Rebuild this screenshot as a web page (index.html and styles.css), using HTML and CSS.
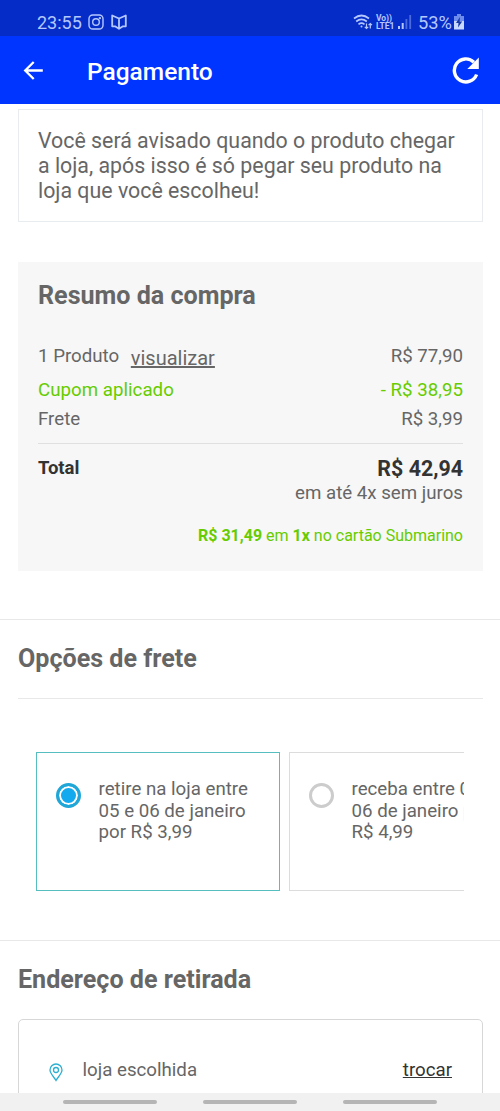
FILE: index.html
```html
<!DOCTYPE html>
<html lang="pt-BR">
<head>
<meta charset="utf-8">
<title>Pagamento</title>
<link rel="stylesheet" href="styles.css">
</head>
<body>
<div class="screen">
  <div class="status">
    <span class="clock">23:55</span>
    <svg class="insta" width="16" height="16" viewBox="0 0 16 16" fill="none" stroke="#b4c8ff" stroke-width="1.4"><rect x="1" y="1" width="14" height="14" rx="3.8"/><circle cx="8" cy="8" r="3.3"/><circle cx="11.9" cy="4.1" r=".5"/></svg>
    <svg class="book" width="16" height="16" viewBox="0 0 16 16" fill="none" stroke="#b4c8ff" stroke-width="1.8" stroke-linejoin="round"><path d="M1.200 1.500 8 4.500l6.800-3v10.800H12L8 14.800 4 12.300H1.200zM8 4.500v10"/></svg>
    <span class="spacer"></span>
    <svg class="wifi" width="20" height="16" viewBox="0 0 20 16" fill="none" stroke="#b4c8ff" stroke-width="1.7"><path d="M1 4.500q7.500-6 15 0M3.200 7.500q5.300-4.300 10.600 0M5.500 10.300q3-2.300 6 0"/><circle cx="8.500" cy="12.500" r="1" fill="#b4c8ff" stroke="none"/><path stroke-width="1.200" d="M13.500 9.500v5m-1.700-1.700 1.700 1.700 1.700-1.700M17.300 14.500v-5m-1.700 1.700 1.700-1.700 1.700 1.700"/></svg>
    <span class="volte"><span>Vo))</span><span>LTE1</span></span>
    <svg class="signal" width="14" height="14" viewBox="0 0 14 14" fill="#b4c8ff"><path d="M0 11h2v3H0zM3.700 8h2v6h-2z"/><path fill-opacity=".4" d="M7.500 4h1.800v10H7.500zM11.300 0h1.800v14h-1.800z"/></svg>
    <span class="percent">53%</span>
    <svg class="battery" width="10" height="16" viewBox="0 0 10 16"><path fill="#6d8cec" d="M3 0h4v2h3v6H0V2h3z"/><path fill="#c9d8ff" d="M0 7h10v8.500H0z"/><path fill="#1637a8" d="M6 3 2 9h2.500L4 13.500 8.200 7.500H5.600z"/></svg>
  </div>
  <header class="appbar">
    <svg width="22" height="22" viewBox="0 0 22 22" fill="none" stroke="#fff" stroke-width="2.300"><path d="M19.800 10.500H2.500M10.700 2 2.200 10.500l8.500 8.500"/></svg>
    <h1>Pagamento</h1>
    <svg width="28" height="28" viewBox="0 0 28 28"><path fill="none" stroke="#fff" stroke-width="3.400" d="M24.600 17.500A11.500 11.500 0 1 1 21.900 5.200"/><path fill="#fff" d="M26.800.5v11.500H15.300z"/></svg>
  </header>
  <main>
    <p class="notice">Você será avisado quando o produto chegar<br>a loja, após isso é só pegar seu produto na<br>loja que você escolheu!</p>
    <section class="summary">
      <h2>Resumo da compra</h2>
      <div class="row product"><span>1 Produto <a>visualizar</a></span><span class="price">R$ 77,90</span></div>
      <div class="row coupon"><span>Cupom aplicado</span><span>- R$ 38,95</span></div>
      <div class="row"><span>Frete</span><span>R$ 3,99</span></div>
      <div class="row total"><b class="label">Total</b><b class="amount">R$ 42,94</b></div>
      <p class="parcel">em até 4x sem juros</p>
      <p class="offer"><b>R$ 31,49</b> em <b>1x</b> no cartão Submarino</p>
    </section>
    <section class="shipping">
      <h2>Opções de frete</h2>
      <div class="options">
        <div class="option selected"><i class="radio"></i><p>retire na loja entre<br>05 e 06 de janeiro<br>por R$ 3,99</p></div>
        <div class="option"><i class="radio"></i><p>receba entre 05 e<br>06 de janeiro por<br>R$ 4,99</p></div>
      </div>
    </section>
    <section class="address">
      <h2>Endereço de retirada</h2>
      <div class="store">
        <svg width="14" height="19" viewBox="0 0 14 19" fill="none" stroke="#2cafd0" stroke-width="1.300"><path d="M7 17.500C5 14 1 10.500 1 7a6 6 0 0 1 12 0c0 3.500-4 7-6 10.500z"/><circle cx="7" cy="7" r="2.500"/></svg>
        <span>loja escolhida</span><a>trocar</a>
      </div>
    </section>
  </main>
  <nav class="navbar"><i></i><i></i><i></i></nav>
</div>
</body>
</html>
```
FILE: styles.css
```css
* { box-sizing: border-box; }
body, h1, h2, p { margin: 0; }
body { font-family: Roboto, "Liberation Sans", sans-serif; color: #666; background: #fff; }
.screen { width: 500px; height: 1111px; display: flex; flex-direction: column; overflow: hidden; }
svg { display: block; flex: none; }

.status { height: 36px; flex: none; display: flex; align-items: center; padding: 8px 36px 0 37px; background: #062cc8; color: #b4c8ff; }
.clock { font-size: 18px; width: 51px; }
.book { margin-left: 7px; }
.spacer { flex: 1; }
.volte { display: flex; flex-direction: column; width: 20px; margin-left: 3px; font-size: 8.5px; line-height: 8px; font-weight: 700; letter-spacing: -.1px; }
.signal { margin-left: 2px; }
.percent { font-size: 18.3px; margin: 0 2px 0 6px; }

.appbar { height: 68px; flex: none; display: flex; align-items: center; padding: 2px 20px 0 23px; background: #0034ff; color: #fff; }
.appbar h1 { flex: 1; margin-left: 42px; font-size: 24.5px; font-weight: 500; }

main { flex: 1; min-height: 0; overflow: hidden; padding-top: 5px; }
.notice { height: 113px; margin: 0 17px 0 18px; padding: 18px 19px; border: 1px solid #e8ecee; font-size: 21.35px; line-height: 25px; white-space: nowrap; }
h2 { font-size: 25.1px; line-height: 30px; font-weight: 700; white-space: nowrap; }

.summary { height: 309px; margin: 40px 17px 0 18px; padding: 19px 20px 0; background: #f7f7f7; font-size: 18.7px; }
.row { display: flex; justify-content: space-between; line-height: 29px; }
.product { margin-top: 30px; height: 35px; }
.product a { position: relative; top: 3px; margin-left: 7px; font-size: 20px; text-decoration: underline; }
.price { padding-top: 1px; }
.coupon, .offer { color: #66cc00; }
.coupon { letter-spacing: .02px; }
.total { margin-top: 9px; padding-top: 10px; border-top: 1px solid #e0e0e0; color: #333; line-height: 28px; }
.label { font-size: 18.5px; }
.amount { font-size: 21.4px; padding-top: 1px; margin-bottom: -1px; }
.parcel { line-height: 22px; text-align: right; }
.offer { margin-top: 21px; font-size: 16px; line-height: 22px; text-align: right; }

.shipping { height: 321px; margin-top: 48px; padding: 24px 17px 0 18px; border-top: 1px solid #e8e8e8; }
.shipping h2 { height: 55px; border-bottom: 1px solid #e8e8e8; }
.options { display: flex; gap: 9px; margin-right: 19px; padding: 53px 0 0 18px; overflow: hidden; }
.option { flex: none; width: 244px; height: 139px; display: flex; gap: 18px; padding: 26px 0 0 18.5px; border: 1px solid #dcdcdc; font-size: 18.7px; line-height: 21.7px; white-space: nowrap; }
.option.selected { border-color: #57bebf; }
.radio { flex: none; width: 25px; height: 25px; margin-top: 4px; border: 3px solid #ccc; border-radius: 50%; }
.selected .radio { border: 3px solid #20a6d7; background: #13a9ee; box-shadow: inset 0 0 0 2px #fff; }

.address { border-top: 1px solid #e8e8e8; padding: 24px 17px 0 18px; }
.store { display: flex; height: 110px; margin-top: 24px; padding: 38px 30px 0 30px; border: 1px solid #d7d7d7; border-radius: 5px; font-size: 18.7px; line-height: 24px; }
.store svg { margin-top: 5px; }
.store span { flex: 1; margin-left: 19.5px; }
.store a { color: #333; text-decoration: underline; }

.navbar { height: 18px; flex: none; display: flex; gap: 46px; padding: 7px 0 0 63px; background: #f1f1f1; }
.navbar i { width: 94px; height: 4px; border-radius: 2px; background: #b5b5b5; }
```
